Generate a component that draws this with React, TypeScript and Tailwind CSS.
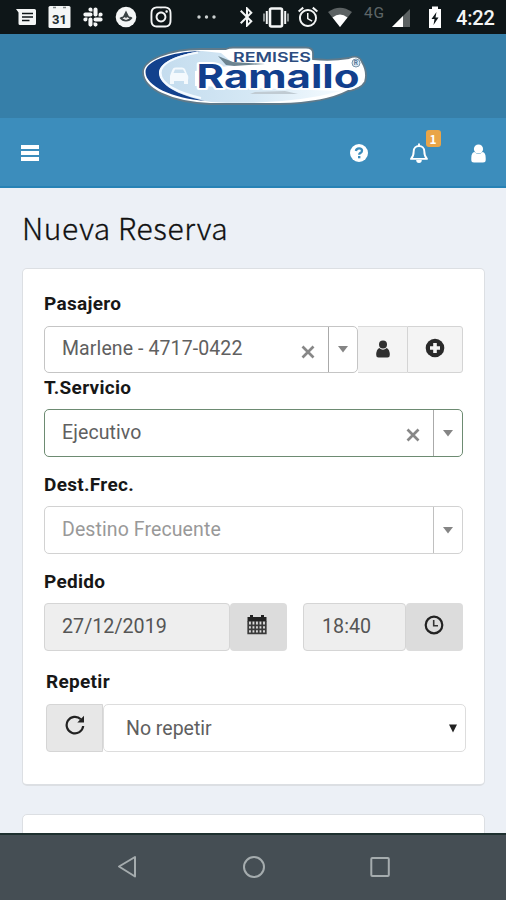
import React from 'react';
import { FaSlack, FaInstagram } from 'react-icons/fa';
import { MdBluetooth, MdAlarm } from 'react-icons/md';

function StatusBar() {
  return (
    <div className="flex h-[34px] shrink-0 items-center bg-[#0e1618] text-[#f4f6f6]">
      <svg className="ml-[15px]" width="22" height="34" viewBox="0 0 22 34">
        <path d="M1 9H19.500a1.500 1.500 0 0 1 1.500 1.500V23.500a1.500 1.500 0 0 1-1.500 1.500H5a1.500 1.500 0 0 1-1.500-1.500V12.500Z" fill="currentColor" />
        <path d="M7 13.500H18M7 17H18M7 20.500H14.500" stroke="#0e1618" strokeWidth="1.700" />
      </svg>
      <svg className="ml-[11px]" width="24" height="34" viewBox="0 0 24 34">
        <rect x="0.500" y="6" width="22" height="22" rx="1.500" fill="currentColor" />
        <path d="M5 7.500H8M15 7.500H18" stroke="#7d8586" strokeWidth="1.500" />
        <text x="11.500" y="23.500" textAnchor="middle" fontFamily="Roboto, sans-serif" fontWeight="700" fontSize="13" fill="#222b2e">31</text>
      </svg>
      <FaSlack className="ml-[10px]" size={22} />
      <svg className="ml-[11px]" width="22" height="34" viewBox="0 0 22 34">
        <circle cx="11" cy="17" r="10.300" fill="currentColor" />
        <path d="M4.500 18Q6 16.500 8 16.500L11 10.500L14 16.500Q17 16.500 17.500 18Q15 21.500 11 21.500Q7 21.500 4.500 18Z" fill="#3a4244" />
        <path d="M7.500 18.500L10 17L11 18.500L12 17L14.500 18.500L11 20Z" fill="#eeeeee" />
      </svg>
      <FaInstagram className="ml-[12px]" size={24} />
      <svg className="ml-[23px]" width="22" height="34" viewBox="0 0 22 34" fill="#cbd0d0">
        <circle cx="3" cy="17" r="1.700" /><circle cx="10.500" cy="17" r="1.700" /><circle cx="18" cy="17" r="1.700" />
      </svg>
      <MdBluetooth className="ml-[17px]" size={24} />
      <svg className="ml-[4px]" width="26" height="34" viewBox="0 0 26 34" fill="none">
        <rect x="7" y="8.500" width="12" height="18" rx="1.500" stroke="currentColor" strokeWidth="2.600" />
        <path d="M3.800 11V24M22.200 11V24" stroke="currentColor" strokeWidth="2" />
        <path d="M1 13.500V21.500M25 13.500V21.500" stroke="#a2a8a8" strokeWidth="1.700" />
      </svg>
      <MdAlarm className="ml-[7px]" size={24} />
      <svg className="ml-[8px]" width="24" height="34" viewBox="0 0 24 34">
        <path d="M0 12Q12 3.500 24 12L12 27Z" fill="#5c6263" />
        <path d="M4.500 17.500Q12 11.500 19.500 17.500L12 27Z" fill="#fff" />
      </svg>
      <span className="ml-[12px] mt-[-6px] w-[22px] font-[Roboto,sans-serif] text-[15.5px] leading-none tracking-[0.8px] text-[#5f6667]">4G</span>
      <svg className="ml-[6px]" width="19" height="34" viewBox="0 0 19 34">
        <path d="M18 9V27H0Z" fill="#5c6263" /><path d="M11 16V27H0Z" fill="#fff" />
      </svg>
      <svg className="ml-[17px]" width="14" height="34" viewBox="0 0 14 34">
        <path d="M4 6.500H10V9H13V28H1V9H4Z" fill="#fff" />
        <path d="M8.500 12L3.500 19H6.500L5.500 25L10.500 17.500H7.500Z" fill="#0e1618" />
      </svg>
      <span className="ml-[14px] mt-[2px] whitespace-nowrap font-[Roboto,sans-serif] text-[20px] font-medium leading-none tracking-[-0.2px]">4:22</span>
    </div>
  );
}

function Logo() {
  return (
    <svg className="ml-[4px]" width="240" height="80" viewBox="0 0 240 80">
      <defs>
        <linearGradient id="ice" x1="0" x2="1">
          <stop offset="0" stopColor="#c4dcee" /><stop offset="0.500" stopColor="#d5e8f5" /><stop offset="1" stopColor="#f5fbff" />
        </linearGradient>
      </defs>
      <path
        d="M8 36C8 24 35 13 65 13H91Q94 11.500 98 11.500H171Q178 11.500 178 17V23Q196 25 214 22Q224 18 227 26Q233 36 230 46Q226 53 213 55Q190 67 145 68H75C35 66 8 53 8 36Z"
        fill="#fff" stroke="#5f7a8b" strokeWidth="1.800"
      />
      <path d="M67 15C40 19 25 27 25 37C25 50 46 61 76 66Q150 70 206 55L60 50V35L100 29L86 17Z" fill="url(#ice)" />
      <path d="M66 15C35 16 10.500 25 10.500 36C10.500 50 37 62 70 65C43 59 24 49 24 37C24 27 40 19 66 15Z" fill="#12418d" />
      <path d="M63 16.500C38 21 25.500 28 25.500 37C25.500 48 43 57 66 62" fill="none" stroke="#f4faff" strokeWidth="2.200" />
      <path d="M35 40L36 37L38 32.500Q39 31.500 41 31.500H47Q49 31.500 50 33L52 38Q54 40 53 44V48H49V45H39V48H35V44Z" fill="#f4f9fd" />
      <path d="M38.500 37L40 33.500H48L50 37Z" fill="#c9dfef" />
      <path d="M83 20L98 26L130 28L99 30L91 29Z" fill="#6c8490" />
      <path d="M120 56L150 55L163 58L115 58Z" fill="#c0cbd3" />
      <g fontFamily="Inter, 'Liberation Sans', sans-serif">
        <text x="61.500" y="51.500" fontSize="32.500" fontWeight="700" textLength="163" lengthAdjust="spacingAndGlyphs" fill="#123f8d" stroke="#fff" strokeWidth="4" strokeLinejoin="round" paintOrder="stroke">Ramallo</text>
        <text x="98" y="26" fontSize="13.500" fontWeight="600" textLength="78" lengthAdjust="spacingAndGlyphs" fill="#2c4c80">REMISES</text>
      </g>
      <circle cx="221" cy="27" r="4" fill="#dfeaf2" stroke="#7795ad" />
      <text x="218.800" y="29.400" fontSize="6.500" fontFamily="Roboto, sans-serif" fontWeight="700" fill="#56799b">R</text>
    </svg>
  );
}

function NavBar() {
  return (
    <div className="flex h-[70px] shrink-0 items-center border-b-2 border-[#2782b5] bg-[#3c8dbc] text-white">
      <div className="ml-[21px] mt-[2px] flex w-[18px] flex-col gap-[2.5px]">
        <div className="h-[3.5px] bg-white" /><div className="h-[3.5px] bg-white" /><div className="h-[3.5px] bg-white" />
      </div>
      <div className="ml-auto mr-[20px] mt-[2px] flex items-center">
        <svg width="18" height="18" viewBox="0 0 18 18">
          <circle cx="9" cy="9" r="9" fill="currentColor" />
          <path d="M5.900 7Q6.200 4.300 9.100 4.300Q12 4.300 12 6.700Q12 8.100 10.500 8.900Q9.200 9.500 9.200 10.800" fill="none" stroke="#3c8dbc" strokeWidth="2.300" />
          <rect x="8" y="12" width="2.400" height="2.300" fill="#3c8dbc" />
        </svg>
        <div className="relative ml-[41px] h-[20px] w-[20px]">
          <svg width="20" height="21" viewBox="0 0 20 21">
            <path d="M10 0.500V3M2 15.900C4.500 13.400 4.700 11 4.700 8.300C4.700 5 7 3 10 3S15.300 5 15.300 8.300C15.300 11 15.500 13.400 18 15.900Z" fill="none" stroke="currentColor" strokeWidth="1.900" strokeLinejoin="round" />
            <path d="M7.200 17H12.800A2.800 2.900 0 0 1 7.200 17Z" fill="currentColor" />
          </svg>
          <span className="absolute left-[16.5px] top-[-13px] flex h-[17px] w-[15px] items-center justify-center rounded-[3px] bg-[#e9a548] font-['Noto_Sans_CJK_SC',sans-serif] text-[12px] font-bold leading-none">1</span>
        </div>
        <svg className="ml-[42px]" width="15" height="19" viewBox="0 0 15 19" fill="currentColor">
          <circle cx="7.500" cy="5" r="4.600" />
          <path d="M3.500 8Q7.500 11.800 11.500 8Q14.700 8.500 14.700 14V16Q14.700 18.500 12 18.500H3Q0.300 18.500 0.300 16V14Q0.300 8.500 3.500 8Z" />
        </svg>
      </div>
    </div>
  );
}

function Label({ children, className = '' }: { children: React.ReactNode; className?: string }) {
  return <div className={`text-[19px] font-bold leading-[22px] tracking-[0.3px] text-[#171717] ${className}`}>{children}</div>;
}

function Cross() {
  return <svg className="mt-[4px]" width="14" height="14" viewBox="0 0 14 14"><path d="M1.500 1.500L12.500 12.500M12.500 1.500L1.500 12.500" stroke="#878787" strokeWidth="2.700" /></svg>;
}

function Arrow() {
  return <svg width="10" height="7" viewBox="0 0 10 7"><path d="M0 0H10L5 6.500Z" fill="#858585" /></svg>;
}

function Combo({ text, border, divider, clear = false, muted = false }: { text: string; border: string; divider: string; clear?: boolean; muted?: boolean }) {
  return (
    <div className={`flex h-full min-w-0 flex-1 rounded-[5px] border-[1.5px] bg-white ${border}`}>
      <div className="flex flex-1 items-center justify-between pl-[17px] pr-[13px]">
        <span className={`-mt-px text-[19.5px] leading-none tracking-[0.1px] ${muted ? 'text-[#999999]' : 'text-[#606060]'}`}>{text}</span>
        {clear && <Cross />}
      </div>
      <div className={`flex w-[29px] items-center justify-center border-l-[1.5px] ${divider}`}><Arrow /></div>
    </div>
  );
}

function UserIcon() {
  return (
    <svg className="-mt-[2px]" width="14" height="18" viewBox="0 0 14 18" fill="#303030">
      <circle cx="7" cy="4.500" r="4" />
      <path d="M3.300 8Q7 11.500 10.700 8Q13.800 9.500 13.800 15Q13.800 17.500 11.500 17.500H2.500Q0.200 17.500 0.200 15Q0.200 9.500 3.300 8Z" />
    </svg>
  );
}

function PlusIcon() {
  return (
    <svg className="-mt-[4px]" width="20" height="20" viewBox="0 0 20 20">
      <circle cx="10" cy="10" r="9.300" fill="#292929" />
      <path d="M10 5V15M5 10H15" stroke="#f4f4f4" strokeWidth="3.600" />
    </svg>
  );
}

function CalendarIcon() {
  return (
    <svg className="-mt-[5px] mr-[3px]" width="20" height="21" viewBox="0 0 20 21">
      <path d="M0.500 3H3V1H6V3H14V1H17V3H19.500V7.500H0.500Z" fill="#222" />
      <path d="M1.200 7V19.300H18.800V7M4.700 7V19M8.200 7V19M11.700 7V19M15.200 7V19M1 11.300H19M1 15.300H19" fill="none" stroke="#3a3a3a" strokeWidth="1.700" />
    </svg>
  );
}

function ClockIcon() {
  return (
    <svg className="-mt-[5px] mr-[2px]" width="20" height="20" viewBox="0 0 20 20" fill="none">
      <circle cx="10" cy="10" r="8.300" stroke="#222" strokeWidth="2.200" />
      <path d="M9.700 5V10.700H14" stroke="#333" strokeWidth="1.600" />
    </svg>
  );
}

function RepeatIcon() {
  return (
    <svg className="-mt-[6px]" width="20" height="20" viewBox="0 0 20 20">
      <path d="M15.800 4.200A8.300 8.300 0 1 0 18.200 11" fill="none" stroke="#222" strokeWidth="2.200" />
      <path d="M19 0.800V7.500H12.300Z" fill="#222" />
    </svg>
  );
}

export default function App() {
  return (
    <div className="flex h-[900px] w-[506px] flex-col overflow-hidden bg-[#ecf0f6] font-[Roboto,sans-serif]">
      <StatusBar />
      <header className="flex h-[84px] shrink-0 justify-center bg-[#367fa9] pt-[2px]"><Logo /></header>
      <NavBar />
      <main className="flex min-h-0 flex-1 flex-col overflow-hidden pl-[22px] pr-[21px]">
        <h1 className="h-[80px] shrink-0 whitespace-nowrap pt-[19px] font-['Noto_Sans_CJK_SC','Noto_Sans',sans-serif] text-[30px] font-light leading-[40px] tracking-[0.6px] text-[#111] [-webkit-text-stroke:0.3px_#111]">Nueva Reserva</h1>
        <section className="h-[518px] shrink-0 rounded-[5px] border border-b-2 border-[#dcdfe3] bg-white px-[21px] pt-[24px]">
          <Label>Pasajero</Label>
          <div className="mt-[11px] flex h-[47px] w-[419px]">
            <Combo text="Marlene - 4717-0422" border="border-[#c5c5c5]" divider="border-[#aaaaaa]" clear />
            <div className="flex w-[49px] items-center justify-center border-y border-[#dadada] bg-[#f4f4f4]"><UserIcon /></div>
            <div className="flex w-[56px] items-center justify-center rounded-r-[3px] border border-[#d4d4d4] bg-[#f4f4f4]"><PlusIcon /></div>
          </div>
          <Label className="mt-[4px]">T.Servicio</Label>
          <div className="mt-[10px] flex h-[48px] w-[419px]">
            <Combo text="Ejecutivo" border="border-[#6d8b72]" divider="border-[#aaaaaa]" clear />
          </div>
          <Label className="mt-[17px]">Dest.Frec.</Label>
          <div className="mt-[10px] flex h-[48px] w-[419px]">
            <Combo text="Destino Frecuente" border="border-[#d2d2d2]" divider="border-[#c0c0c0]" muted />
          </div>
          <Label className="mt-[17px]">Pedido</Label>
          <div className="mt-[10px] flex h-[48px] w-[419px]">
            <div className="flex w-[186px] items-center rounded-[4px] border border-[#d5d5d5] bg-[#eeeeee] pl-[17px] text-[19.7px] text-[#555]">27/12/2019</div>
            <div className="flex w-[57px] items-center justify-center rounded-[4px] bg-[#dcdcdc]"><CalendarIcon /></div>
            <div className="ml-[16px] flex w-[103px] items-center rounded-[4px] border border-[#d5d5d5] bg-[#eeeeee] pl-[18px] text-[19.7px] text-[#555]">18:40</div>
            <div className="flex w-[57px] items-center justify-center rounded-[4px] bg-[#dcdcdc]"><ClockIcon /></div>
          </div>
          <Label className="ml-[2px] mt-[20px]">Repetir</Label>
          <div className="ml-[2px] mt-[11px] flex h-[48px] w-[420px]">
            <div className="flex w-[57px] items-center justify-center rounded-l-[4px] border border-[#d5d5d5] bg-[#e7e7e7]"><RepeatIcon /></div>
            <div className="flex flex-1 items-center justify-between rounded-[5px] border-[1.5px] border-[#dddddd] bg-white pl-[22px] pr-[8px] text-[19.5px] text-[#606060]">
              <span className="pt-px">No repetir</span>
              <svg width="8" height="9" viewBox="0 0 8 9"><path d="M0 0.500H8L4 8.500Z" fill="#222" /></svg>
            </div>
          </div>
        </section>
        <section className="mt-[28px] h-[60px] shrink-0 rounded-[5px] border border-[#dcdfe3] bg-white" />
      </main>
      <footer className="flex h-[67px] shrink-0 items-center justify-center border-t-2 border-[#1e302f] bg-[#454e54]">
        <svg width="506" height="65" viewBox="0 0 506 65" fill="none" stroke="#a5acae" strokeWidth="2">
          <path d="M119 31.500L135 22V41.500Z" strokeLinejoin="round" />
          <circle cx="254" cy="32" r="10" />
          <rect x="371.300" y="23" width="17.500" height="18" rx="1" />
        </svg>
      </footer>
    </div>
  );
}
